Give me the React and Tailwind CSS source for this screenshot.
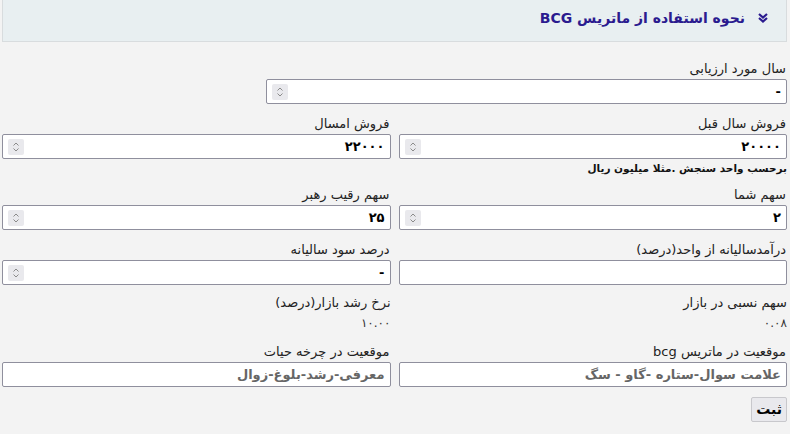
import { useState } from "react";

const Spinner = () => (
    <div className="w-4 h-4 bg-[#e9e9ed] rounded-[2px] flex items-center justify-center shrink-0">
        <svg width="8" height="12" viewBox="0 0 8 12" fill="none" stroke="#8a8a8a" strokeWidth="1">
            <path d="M1.5 4.5 L4 2 L6.5 4.5" />
            <path d="M1.5 7.5 L4 10 L6.5 7.5" />
        </svg>
    </div>
);

const Field = ({ label, value, spinner = true, big = false, className = "" }) => (
    <div className={"flex flex-col " + className}>
        <label className="text-[13px] leading-[16px] text-[#222] mb-[2px] pr-[1px]">{label}</label>
        <div className="h-[25px] bg-white border border-[#8f8f9d] rounded-[2px] flex items-center px-[5px]">
            <span
                className={
                    big
                        ? "flex-1 text-[13px] font-bold text-[#666]"
                        : "flex-1 text-[13px] font-bold text-black"
                }
            >
                {value}
            </span>
            {spinner && <Spinner />}
        </div>
    </div>
);

const Info = ({ label, value }) => (
    <div className="flex flex-col">
        <span className="text-[13px] leading-[16px] text-[#222]">{label}</span>
        <span className="text-[12px] leading-[16px] text-[#333] mt-[4px]">{value}</span>
    </div>
);

const App = () => {
    const [open, setOpen] = useState(true);

    return (
        <div
            dir="rtl"
            className="w-[790px] h-[434px] bg-[#f3f3f3] overflow-hidden"
            style={{ fontFamily: '"DejaVu Sans", "Noto Sans", sans-serif' }}
        >
            {/* accordion header */}
            <div className="mx-[2px] mr-[3px] h-[42px] bg-[#e8eff1] border border-[#d8dcde] border-t-0 flex items-center pr-[18px] pb-[5px] gap-[13px]">
                <button onClick={() => setOpen(!open)} className="text-[#2b1b8f]">
                    <svg width="10" height="10" viewBox="0 0 10 10" fill="none" stroke="#2b1b8f" strokeWidth="2.2">
                        <path d="M1 1 L5 4.5 L9 1" />
                        <path d="M1 5 L5 8.5 L9 5" />
                    </svg>
                </button>
                <span className="text-[14px] font-bold text-[#2b1b8f]">نحوه استفاده از ماتریس BCG</span>
            </div>

            {open && (
                <div className="pr-[3px] pl-[2px] pt-[19px]">
                    <Field label="سال مورد ارزیابی" value="-" className="w-[521px]" />

                    <div className="grid grid-cols-2 gap-x-[8px] mt-[12px]">
                        <div>
                            <Field label="فروش سال قبل" value="۲۰۰۰۰" />
                            <p className="text-[10.5px] font-bold text-[#111] mt-[2px] leading-[14px]">برحسب واحد سنجش .مثلا میلیون ریال</p>
                        </div>
                        <Field label="فروش امسال" value="۲۲۰۰۰" />
                    </div>

                    <div className="grid grid-cols-2 gap-x-[8px] mt-[12px]">
                        <Field label="سهم شما" value="۲" />
                        <Field label="سهم رقیب رهبر" value="۲۵" />
                    </div>

                    <div className="grid grid-cols-2 gap-x-[8px] mt-[12px]">
                        <Field label="درآمدسالیانه از واحد(درصد)" value="" spinner={false} />
                        <Field label="درصد سود سالیانه" value="-" />
                    </div>

                    <div className="grid grid-cols-2 gap-x-[8px] mt-[10px]">
                        <Info label="سهم نسبی در بازار" value="۰.۰۸" />
                        <Info label="نرخ رشد بازار(درصد)" value="۱۰.۰۰" />
                    </div>

                    <div className="grid grid-cols-2 gap-x-[8px] mt-[13px]">
                        <Field label="موقعیت در ماتریس bcg" value="علامت سوال-ستاره -گاو - سگ" spinner={false} big />
                        <Field label="موقعیت در چرخه حیات" value="معرفی-رشد-بلوغ-زوال" spinner={false} big />
                    </div>

                    <div className="mt-[10px] flex">
                        <button className="h-[25px] px-[4px] bg-[#e9e9ed] border border-[#c8c8cc] rounded-[2px] text-[14px] font-bold text-black">
                            ثبت
                        </button>
                    </div>
                </div>
            )}
        </div>
    );
};

export default App;
